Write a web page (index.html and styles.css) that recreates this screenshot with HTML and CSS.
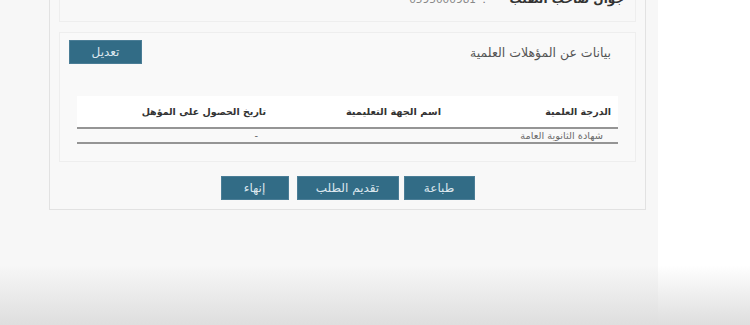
FILE: index.html
```html
<!DOCTYPE html>
<html lang="ar" dir="rtl">
<head>
<meta charset="utf-8">
<title>بيانات الطلب</title>
<link rel="stylesheet" href="styles.css">
</head>
<body>
<div class="page">
  <main class="main">
    <div class="card">
      <section class="panel panel-top">
        <div class="info-row">
          <span class="info-label">جوال صاحب الطلب</span>
          <span class="info-colon">:</span>
          <span class="info-value">0595000981</span>
        </div>
      </section>
      <section class="panel panel-qual">
        <div class="panel-head">
          <h2 class="panel-title">بيانات عن المؤهلات العلمية</h2>
          <button class="btn btn-edit" type="button">تعديل</button>
        </div>
        <table class="qual-table">
          <thead>
            <tr>
              <th class="c1">الدرجة العلمية</th>
              <th class="c2">اسم الجهة التعليمية</th>
              <th class="c3">تاريخ الحصول على المؤهل</th>
            </tr>
          </thead>
          <tbody>
            <tr>
              <td class="c1">شهادة الثانوية العامة</td>
              <td class="c2"></td>
              <td class="c3">-</td>
            </tr>
          </tbody>
        </table>
      </section>
      <div class="actions">
        <button class="btn btn-print" type="button">طباعة</button>
        <button class="btn btn-submit" type="button">تقديم الطلب</button>
        <button class="btn btn-end" type="button">إنهاء</button>
      </div>
    </div>
  </main>
  <aside class="side"></aside>
</div>
</body>
</html>
```
FILE: styles.css
```css
html, body {
  margin: 0;
  padding: 0;
}
body {
  width: 750px;
  height: 325px;
  overflow: hidden;
  font-family: "DejaVu Sans", "Noto Sans", sans-serif;
  background:
    linear-gradient(to bottom, rgba(226,226,226,0) 265px, rgba(222,222,222,1) 325px),
    linear-gradient(to right, #f7f7f7 658px, #ffffff 658px);
}
.page {
  display: flex;
  direction: ltr;
  height: 325px;
}
.main {
  width: 658px;
  direction: rtl;
}
.side {
  flex: 1;
}
.card {
  margin-top: -11px;
  margin-right: 12px;
  width: 577px;
  border: 1px solid #e2e2e2;
  border-top: none;
  background: #f8f8f8;
  padding: 0 9px 8px;
}
.panel {
  border: 1px solid #eeeeee;
  background: #f8f8f8;
}
.panel-top {
  height: 32px;
  border-top: none;
}
.info-row {
  display: flex;
  align-items: baseline;
  padding-right: 11px;
  height: 20px;
  line-height: 20px;
}
.info-label {
  font-size: 12px;
  font-weight: bold;
  color: #333;
  width: 138px;
}
.info-colon {
  font-size: 11px;
  color: #777;
  width: 10px;
}
.info-value {
  font-size: 10.5px;
  color: #888;
  margin-right: 0;
}
.panel-qual {
  margin-top: 10px;
  padding: 7px 17px 17px 18px;
  background: #f9f9f9;
}
.panel-head {
  display: flex;
  align-items: center;
  justify-content: space-between;
  margin: 0 -8px 32px -9px;
}
.panel-title {
  margin: 0 15px 0 0;
  font-size: 12.5px;
  font-weight: normal;
  color: #555;
}
.btn {
  border: 1px solid #4a7d96;
  background: #326c86;
  color: #dce7ee;
  font-family: "DejaVu Sans", "Noto Sans", sans-serif;
  font-size: 12px;
  height: 24px;
  padding: 0;
  border-radius: 0;
}
.btn-edit {
  width: 73px;
  height: 24px;
}
.qual-table {
  width: 541px;
  border-collapse: collapse;
  table-layout: fixed;
}
.qual-table th {
  background: #ffffff;
  height: 31px;
  padding: 0 7px 0 0;
  text-align: right;
  font-size: 9.5px;
  font-weight: bold;
  color: #333;
  border-bottom: 2px solid #959595;
}
.qual-table th.c2 {
  font-size: 9.8px;
}
.qual-table td {
  height: 13px;
  padding: 0 15px 0 0;
  text-align: right;
  font-size: 9.8px;
  color: #6a6a6a;
  line-height: 13px;
  border-bottom: 2px solid #959595;
}
.qual-table .c1 { width: 163px; }
.qual-table .c2 { width: 168px; }
.qual-table .c3 { width: auto; }
.actions {
  display: flex;
  justify-content: center;
  margin-top: 14px;
  padding-bottom: 1px;
}
.btn-print { width: 71px; }
.btn-submit { width: 102px; margin-right: 5px; }
.btn-end { width: 68px; margin-right: 8px; }
```
